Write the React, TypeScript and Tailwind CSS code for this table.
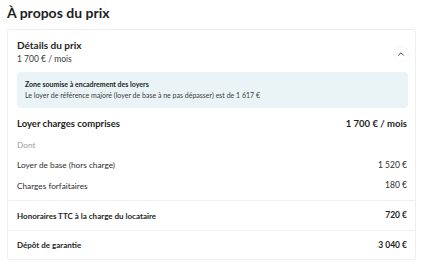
import { ChevronUp } from "lucide-react";

function Row({ label, value, muted }: { label: string; value?: string; muted?: boolean }) {
    return (
        <div className="flex items-center justify-between h-[20.5px]">
            <span className={muted ? "text-[#9c9c9c]" : "text-[#2e2e2e]"}>{label}</span>
            {value && <span className="text-[#2e2e2e] text-[8.5px]">{value}</span>}
        </div>
    );
}

export default function App() {
    return (
        <div className="w-[423px] h-[263px] bg-white overflow-hidden font-['Lato',sans-serif] text-[#1e1e1e]">
            <h2 className="pl-[7px] pt-[4px] text-[14px] leading-[18px] font-bold text-[#1e1e1e]">À propos du prix</h2>
            <div className="mt-[7px] ml-[7px] w-[409px] border border-[#eeeeee] rounded-[3px]">
                <div className="flex items-start justify-between pl-[9px] pr-[6px] pt-[8px]">
                    <div>
                        <div className="text-[10px] leading-[14px] font-bold">Détails du prix</div>
                        <div className="text-[8.5px] leading-[12px] mt-[1px] text-[#3a3a3a]">1 700 € / mois</div>
                    </div>
                    <div className="mt-[8px] w-[16px] h-[16px] rounded-full border border-[#f7f7f7] flex items-center justify-center">
                        <ChevronUp size={10} strokeWidth={2.4} className="text-[#4a4a4a]" />
                    </div>
                </div>
                <div className="ml-[9px] mr-[7px] mt-[7px] rounded-[4px] bg-[#eaf4f6] px-[8px] py-[7px] text-[7px] leading-[11px]">
                    <div className="font-bold text-[#1e1e1e]">Zone soumise à encadrement des loyers</div>
                    <div className="text-[#3a3a3a]">Le loyer de référence majoré (loyer de base à ne pas dépasser) est de 1 617 €</div>
                </div>
                <div className="pl-[9px] pr-[8px] mt-[6px] text-[8.25px]">
                    <div className="flex items-center justify-between h-[20.5px] text-[9.5px] font-bold text-[#1e1e1e]">
                        <span>Loyer charges comprises</span>
                        <span>1 700 € / mois</span>
                    </div>
                    <Row label="Dont" muted />
                    <Row label="Loyer de base (hors charge)" value="1 520 €" />
                    <Row label="Charges forfaitaires" value="180 €" />
                </div>
                <div className="mt-[4px] border-t border-[#f0f0f0] pl-[9px] pr-[8px] text-[8px] font-bold text-[#1e1e1e]">
                    <div className="flex items-center justify-between h-[29px]">
                        <span>Honoraires TTC à la charge du locataire</span>
                        <span className="text-[8.5px]">720 €</span>
                    </div>
                </div>
                <div className="border-t border-[#f0f0f0] pl-[9px] pr-[8px] text-[8px] font-bold text-[#1e1e1e]">
                    <div className="flex items-center justify-between h-[28px]">
                        <span>Dépôt de garantie</span>
                        <span className="text-[8.5px]">3 040 €</span>
                    </div>
                </div>
            </div>
        </div>
    );
}
